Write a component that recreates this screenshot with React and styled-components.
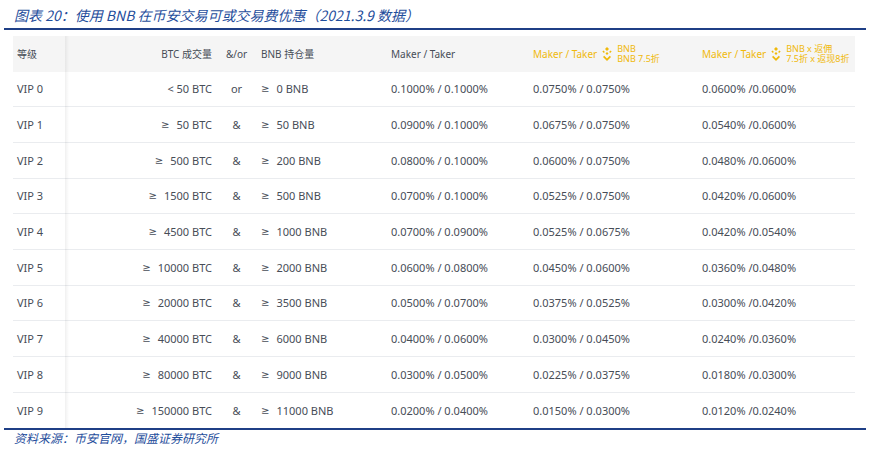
import React from "react";
import styled, { createGlobalStyle } from "styled-components";

const G = createGlobalStyle`
  body{margin:0;background:#fff;font-family:"Noto Sans","DejaVu Sans","Noto Sans CJK SC",sans-serif;}
`;
const Page = styled.div`width:879px;height:452px;padding:6px 13px 0 4px;box-sizing:border-box;`;
const Title = styled.div`font-style:italic;color:#1f4e9c;font-size:14px;line-height:18px;padding-left:10px;font-family:"Noto Sans CJK SC",sans-serif;`;
const Rule = styled.div`height:1.5px;background:#1f3f86;margin-top:4px;`;
const Table = styled.div`margin:6px 11px 0 9px;position:relative;`;
const Shadow = styled.div`position:absolute;left:52px;top:0;bottom:0;width:4px;background:linear-gradient(to right,rgba(0,0,0,0.06),rgba(0,0,0,0));`;
const Row = styled.div`
  display:grid;grid-template-columns:52px 147px 49px 130px 142px 169px 1fr;
  align-items:center;height:${p=>p.$h}px;font-size:${p=>p.$head?10:11}px;
  color:#474d57;
  background:${p=>p.$head?"#f5f5f5":"#fff"};
  border-bottom:${p=>p.$last||p.$head?"none":"1px solid #eaecef"};box-sizing:border-box;
  font-family:"Noto Sans","DejaVu Sans","Noto Sans CJK SC",sans-serif;
`;
const Cell = styled.div`padding-left:${p=>p.$pl||0}px;
  color:${p=>p.$gold?"#f0b90b":"inherit"};display:flex;align-items:center;gap:4px;white-space:nowrap;
  justify-content:${p=>p.$a==="right"?"flex-end":p.$a==="center"?"center":"flex-start"};`;
const Ge = styled.span`font-family:"DejaVu Sans",sans-serif;font-size:0.92em;margin-right:3px;`;
const Small = styled.div`font-size:9px;line-height:10px;padding-top:1px;`;
const Foot = styled.div`font-style:italic;color:#1f4e9c;font-size:12px;padding-left:10px;line-height:16px;font-family:"Noto Sans CJK SC",sans-serif;`;

const Logo = () => (
  <svg width="12" height="14" viewBox="0 0 12 14"><g fill="#f0b90b">
    <path d="M6 0l2 2-2 2-2-2z"/><path d="M2.5 3.5l1.4 1.4L2.8 6 1.4 4.6z"/><path d="M9.5 3.5l1.1 1.1L9.2 6 8.1 4.9z"/>
    <path d="M6 5l1.5 1.5L6 8 4.5 6.5z"/>
    <path d="M2 10l1.2-1.2L6 11.6l2.8-2.8L10 10l-4 4z"/></g></svg>
);

const data = [
 ["VIP 0","< 50 BTC","or","0 BNB","0.1000% / 0.1000%","0.0750% / 0.0750%","0.0600% /0.0600%"],
 ["VIP 1","50 BTC","&","50 BNB","0.0900% / 0.1000%","0.0675% / 0.0750%","0.0540% /0.0600%"],
 ["VIP 2","500 BTC","&","200 BNB","0.0800% / 0.1000%","0.0600% / 0.0750%","0.0480% /0.0600%"],
 ["VIP 3","1500 BTC","&","500 BNB","0.0700% / 0.1000%","0.0525% / 0.0750%","0.0420% /0.0600%"],
 ["VIP 4","4500 BTC","&","1000 BNB","0.0700% / 0.0900%","0.0525% / 0.0675%","0.0420% /0.0540%"],
 ["VIP 5","10000 BTC","&","2000 BNB","0.0600% / 0.0800%","0.0450% / 0.0600%","0.0360% /0.0480%"],
 ["VIP 6","20000 BTC","&","3500 BNB","0.0500% / 0.0700%","0.0375% / 0.0525%","0.0300% /0.0420%"],
 ["VIP 7","40000 BTC","&","6000 BNB","0.0400% / 0.0600%","0.0300% / 0.0450%","0.0240% /0.0360%"],
 ["VIP 8","80000 BTC","&","9000 BNB","0.0300% / 0.0500%","0.0225% / 0.0375%","0.0180% /0.0300%"],
 ["VIP 9","150000 BTC","&","11000 BNB","0.0200% / 0.0400%","0.0150% / 0.0300%","0.0120% /0.0240%"],
];

export default function App(){
  return (<Page><G/>
    <Title>图表 20：使用 BNB 在币安交易可或交易费优惠（2021.3.9 数据）</Title>
    <Rule/>
    <Table><Shadow/>
      <Row $head $h={36}>
        <Cell $pl={4}>等级</Cell><Cell $a="right">BTC 成交量</Cell><Cell $a="center">&amp;/or</Cell>
        <Cell>BNB 持仓量</Cell><Cell>Maker / Taker</Cell>
        <Cell $gold>Maker / Taker <Logo/><Small>BNB<br/>BNB 7.5折</Small></Cell>
        <Cell $gold>Maker / Taker <Logo/><Small>BNB x 返佣<br/>7.5折 x 返现8折</Small></Cell>
      </Row>
      {data.map((r,i)=>(
        <Row key={r[0]} $h={35.7} $last={i===9}>
          <Cell $pl={4}>{r[0]}</Cell>
          <Cell $a="right">{i===0?r[1]:<><Ge>≥</Ge>{r[1]}</>}</Cell>
          <Cell $a="center">{r[2]}</Cell>
          <Cell><Ge>≥</Ge>{r[3]}</Cell><Cell>{r[4]}</Cell><Cell>{r[5]}</Cell><Cell>{r[6]}</Cell>
        </Row>))}
    </Table>
    <Rule style={{marginTop:0}}/>
    <Foot>资料来源：币安官网，国盛证券研究所</Foot>
  </Page>);
}
